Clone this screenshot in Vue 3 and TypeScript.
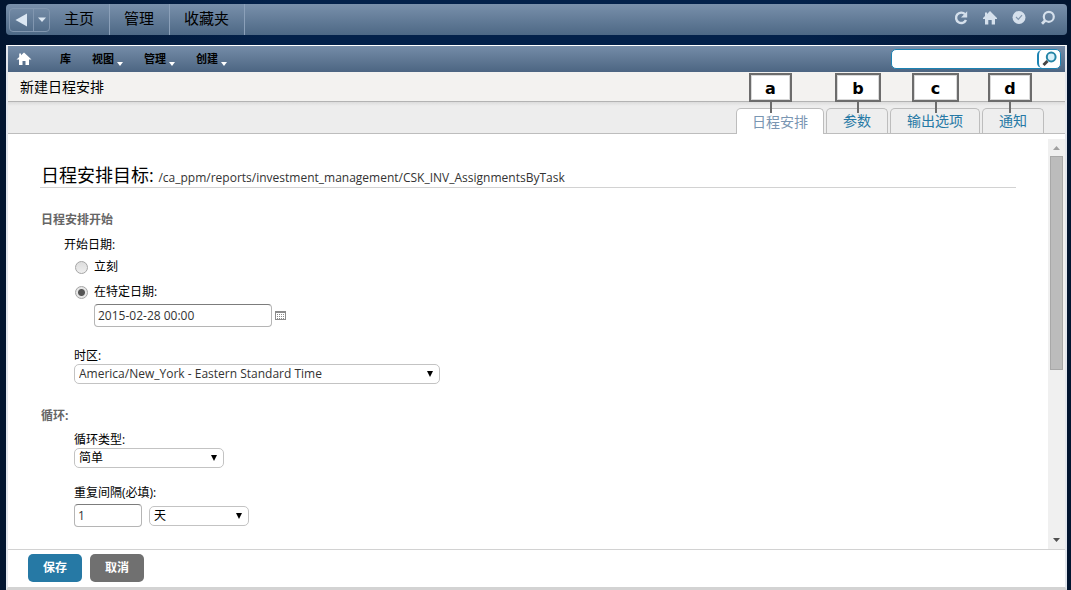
<script setup lang="ts">
import { ref } from 'vue'

interface Tab {
  label: string
  mark: string
  left: number
  width: number
}

const mainNav: string[] = ['主页', '管理', '收藏夹']
const menus = [
  { label: '库', drop: false },
  { label: '视图', drop: true },
  { label: '管理', drop: true },
  { label: '创建', drop: true },
]
const tabs: Tab[] = [
  { label: '日程安排', mark: 'a', left: 12, width: 43 },
  { label: '参数', mark: 'b', left: 8, width: 46 },
  { label: '输出选项', mark: 'c', left: 21, width: 47 },
  { label: '通知', mark: 'd', left: 5, width: 44 },
]
const active = ref(0)
const query = ref('')
const start = ref('date')
const startDate = ref('2015-02-28 00:00')
const interval = ref('1')
</script>

<template>
  <div class="app">
    <header class="topbar">
      <div class="history">
        <button type="button" class="back" aria-label="后退">
          <svg width="13" height="14" viewBox="0 0 13 14"><path d="M12 0.5V13.5L0.5 7Z" fill="#dbe7f3" /></svg>
        </button>
        <button type="button" class="recent" aria-label="历史记录">
          <svg width="8" height="5" viewBox="0 0 8 5"><path d="M0 0.5H8L4 5Z" fill="#dbe7f3" /></svg>
        </button>
      </div>
      <nav class="main-nav">
        <a v-for="item in mainNav" :key="item" href="#">{{ item }}</a>
      </nav>
      <div class="tools">
        <button type="button" aria-label="刷新">
          <svg width="16" height="16" viewBox="0 0 16 16"><path d="M12 4.2A5.2 5.2 0 1 0 13 10" fill="none" stroke="#d5e0ec" stroke-width="2.4" /><path d="M14.2 1.2V7.4H8Z" fill="#d5e0ec" /></svg>
        </button>
        <button type="button" aria-label="主页">
          <svg width="16" height="16" viewBox="0 0 16 16"><path d="M8 1L15 8V9H13V14.5H9.7V10H6.3V14.5H3V9H1V8L3 6V2.5H5V4Z" fill="#d5e0ec" /></svg>
        </button>
        <button type="button" aria-label="任务">
          <svg width="16" height="16" viewBox="0 0 16 16"><circle cx="8" cy="7.5" r="6.5" fill="#d5e0ec" /><path d="M5 7L7.3 9.3L11 5.2" fill="none" stroke="#8095ad" stroke-width="1.2" /></svg>
        </button>
        <button type="button" aria-label="搜索">
          <svg width="16" height="16" viewBox="0 0 16 16"><circle cx="8.8" cy="6.8" r="5" fill="none" stroke="#d5e0ec" stroke-width="2.2" /><path d="M5.5 10.2L2 13.7" stroke="#d5e0ec" stroke-width="2.8" /></svg>
        </button>
      </div>
    </header>

    <main class="frame">
      <div class="menubar">
        <a href="#" class="home" aria-label="主页">
          <svg width="16" height="14" viewBox="0 0 16 14"><path d="M8 0.5L15.5 7.5H13V13H9.5V9H6.5V13H3V7.5H0.5L3.2 5V1.5H5V3.3Z" fill="#fff" /></svg>
        </a>
        <nav class="menus">
          <button v-for="m in menus" :key="m.label" type="button">
            {{ m.label }}<svg v-if="m.drop" width="6" height="4" viewBox="0 0 6 4"><path d="M0 0H6L3 4Z" fill="#fff" /></svg>
          </button>
        </nav>
        <form class="search" @submit.prevent>
          <input v-model="query" type="text" aria-label="搜索" />
          <button type="submit" aria-label="执行搜索">
            <svg width="16" height="16" viewBox="0 0 16 16"><path d="M5.5 10L1.5 14" stroke="#444" stroke-width="3" /><circle cx="9.2" cy="6" r="4.4" fill="#d9f1fa" stroke="#2585a6" stroke-width="2" /></svg>
          </button>
        </form>
      </div>

      <h1 class="title">新建日程安排</h1>

      <div class="tabs" role="tablist">
        <button
          v-for="(tab, i) in tabs"
          :key="tab.label"
          type="button"
          role="tab"
          class="tab"
          :class="{ active: active === i }"
          :aria-selected="active === i"
          @click="active = i"
        >
          {{ tab.label }}
          <span class="callout" :style="{ left: tab.left + 'px', width: tab.width + 'px' }">{{ tab.mark }}</span>
        </button>
      </div>

      <div class="pane">
        <form class="form" @submit.prevent>
          <h2 class="target">日程安排目标: <span>/ca_ppm/reports/investment_management/CSK_INV_AssignmentsByTask</span></h2>

          <h3>日程安排开始</h3>
          <div class="start">
            <div class="label">开始日期:</div>
            <div class="radios">
              <label class="radio"><input v-model="start" type="radio" name="start" value="now" />立刻</label>
              <label class="radio"><input v-model="start" type="radio" name="start" value="date" />在特定日期:</label>
              <div class="date">
                <input v-model="startDate" type="text" class="text" aria-label="开始日期" />
                <button type="button" aria-label="日历">
                  <svg width="11" height="9" viewBox="0 0 11 9" shape-rendering="crispEdges">
                    <rect width="11" height="9" fill="#8c8c8c" />
                    <rect x="1" y="2" width="9" height="6" fill="#fff" />
                    <path d="M2 3.5H9M2 5.5H9M2 7.5H9" stroke="#8c8c8c" stroke-dasharray="1 1" />
                  </svg>
                </button>
              </div>
            </div>
          </div>
          <div class="field zone">
            <label for="zone">时区:</label>
            <div class="select wide">
              <select id="zone"><option>America/New_York - Eastern Standard Time</option></select>
              <svg width="6" height="6" viewBox="0 0 6 6"><path d="M0 0H6L3 6Z" /></svg>
            </div>
          </div>

          <h3>循环:</h3>
          <div class="field">
            <label for="kind">循环类型:</label>
            <div class="select medium">
              <select id="kind"><option>简单</option></select>
              <svg width="6" height="6" viewBox="0 0 6 6"><path d="M0 0H6L3 6Z" /></svg>
            </div>
          </div>
          <div class="field repeat">
            <label for="every">重复间隔(必填):</label>
            <div class="row">
              <input id="every" v-model="interval" type="text" class="text short" />
              <div class="select small">
                <select aria-label="间隔单位"><option>天</option></select>
                <svg width="6" height="6" viewBox="0 0 6 6"><path d="M0 0H6L3 6Z" /></svg>
              </div>
            </div>
          </div>
        </form>
        <div class="scrollbar" aria-hidden="true">
          <svg width="7" height="4" viewBox="0 0 7 4"><path d="M0 4H7L3.5 0Z" fill="#a0a0a0" /></svg>
          <div class="thumb"></div>
          <svg width="7" height="4" viewBox="0 0 7 4"><path d="M0 0H7L3.5 4Z" fill="#505050" /></svg>
        </div>
      </div>

      <footer class="actions">
        <button type="button" class="save">保存</button>
        <button type="button" class="cancel">取消</button>
      </footer>
    </main>
  </div>
</template>

<style>
body {
  margin: 0;
  background: #021530;
}
</style>

<style scoped>
.app,
.app * {
  box-sizing: border-box;
}
.app {
  min-height: 100vh;
  padding: 4px 4px 0 6px;
  display: flex;
  flex-direction: column;
  background: linear-gradient(90deg, #021530 0, #03214a 25%, #03214a 75%, #021530 100%);
  font-family: "Open Sans", "Noto Sans CJK SC", sans-serif;
  font-size: 12px;
  line-height: 16px;
  color: #000;
}
button,
input,
select {
  font: inherit;
  color: inherit;
  margin: 0;
  padding: 0;
  border: 0;
  background: none;
}
svg {
  display: block;
  flex: none;
}
h1,
h2,
h3 {
  margin: 0;
}

.topbar {
  height: 31px;
  display: flex;
  align-items: center;
  padding-left: 3px;
  border-radius: 4px;
  background: linear-gradient(#7990ab, #4d6885);
}
.history {
  display: flex;
  width: 41px;
  height: 24px;
  border: 1px solid #8196af;
  border-radius: 4px;
}
.history button {
  display: flex;
  align-items: center;
  justify-content: center;
}
.back {
  flex: 1;
}
.history .recent {
  width: 16px;
  border-left: 1px solid #8196af;
}
.main-nav {
  display: flex;
  align-self: stretch;
}
.main-nav a {
  display: flex;
  align-items: center;
  padding: 0 15px 3px 14px;
  border-right: 1px solid #8ba0b9;
  color: #000;
  font-size: 15px;
  text-decoration: none;
}
.tools {
  display: flex;
  gap: 13px;
  margin-left: auto;
  padding: 0 11px 4px 0;
}

.frame {
  flex: 1;
  display: flex;
  flex-direction: column;
  margin-top: 10px;
  border: 2px solid #e3e7ee;
  border-top: 1px solid #fff;
  border-bottom: 3px solid #d3d3d3;
  background: #fff;
}
.menubar {
  height: 26px;
  display: flex;
  align-items: center;
  padding: 0 4px 0 8px;
  background: linear-gradient(#758ca8, #4c6582);
}
.menus {
  display: flex;
  gap: 21px;
  margin-left: 28px;
}
.menus button {
  display: flex;
  gap: 3px;
  align-items: center;
  font-size: 11px;
  font-weight: 700;
}
.menus svg {
  align-self: flex-end;
  margin-bottom: 1px;
}
.search {
  display: flex;
  width: 170px;
  height: 20px;
  margin-left: auto;
  border: 1px solid #1b83b3;
  border-radius: 5px;
  background: #fff;
}
.search input {
  flex: 1;
  min-width: 0;
  padding: 0 6px;
}
.search button {
  width: 23px;
  display: flex;
  align-items: center;
  justify-content: center;
  border-left: 2px solid #1b83b3;
  border-radius: 5px;
}
.title {
  height: 30px;
  padding: 0 12px;
  border-bottom: 1px solid #b3b3b3;
  background: #f3f2f0;
  font-size: 14px;
  font-weight: 400;
  line-height: 30px;
}
.tabs {
  height: 32px;
  display: flex;
  justify-content: flex-end;
  align-items: flex-end;
  gap: 2px;
  padding-right: 21px;
  border-bottom: 1px solid #bdbdbd;
  background: linear-gradient(#dcdcdc, #ededed 4px);
}
.tab {
  position: relative;
  height: 25px;
  padding: 0 16px;
  border: 1px solid #bdbdbd;
  border-bottom: 0;
  border-radius: 5px 5px 0 0;
  background: #eee;
  color: #2679a5;
  font-size: 14px;
  line-height: 24px;
}
.tab.active {
  height: 26px;
  margin-bottom: -1px;
  padding: 0 15px;
  background: #fff;
  color: #7a96b2;
}
.callout {
  position: absolute;
  top: -36px;
  height: 29px;
  border: 2px solid #6c6c6c;
  background: #fff;
  box-shadow: inset 0 0 0 1px #d9d9d9;
  color: #000;
  font-family: "DejaVu Sans", sans-serif;
  font-size: 16px;
  font-weight: 700;
  line-height: 28px;
  text-align: center;
}
.callout::after {
  content: "";
  position: absolute;
  top: 27px;
  left: 50%;
  width: 2px;
  height: 11px;
  margin-left: -1px;
  background: #6c6c6c;
}

.pane {
  flex: 1;
  display: flex;
  justify-content: space-between;
}
.form {
  flex: 1;
  padding: 30px 32px 20px;
}
.target {
  height: 24px;
  padding-left: 1px;
  border-bottom: 1px solid #d2d2d2;
  font-size: 18px;
  font-weight: 400;
  line-height: 22px;
  white-space: nowrap;
}
.target span {
  color: #333;
  font-size: 12px;
}
h3 {
  margin-top: 24px;
  padding-left: 1px;
  color: #666;
  font-size: 12px;
  font-weight: 700;
  line-height: 16px;
}
.start {
  padding: 9px 0 0 24px;
}
.radios {
  padding: 1px 0 0 11px;
}
.radio {
  display: flex;
  align-items: center;
  gap: 6px;
  height: 26px;
}
.radio input {
  appearance: none;
  width: 13px;
  height: 13px;
  border: 1px solid #a5a5a5;
  border-radius: 50%;
  background: linear-gradient(#ddd, #eee);
}
.radio input:checked {
  background: radial-gradient(circle, #555 0 3px, #e6e6e6 4px);
}
.radio + .radio {
  height: 24px;
}
.date {
  display: flex;
  align-items: center;
  gap: 3px;
  padding-left: 19px;
}
.text {
  width: 178px;
  height: 23px;
  padding: 0 3px;
  border: 1px solid #b5b5b5;
  border-top-color: #7c7c7c;
  border-radius: 4px;
  background: #fff;
  color: #333;
}
.text.short {
  width: 68px;
}
.field {
  padding: 8px 0 0 34px;
}
.field label {
  display: block;
}
.field.zone {
  padding-top: 21px;
}
.field.repeat {
  padding-top: 17px;
}
.row {
  display: flex;
  align-items: center;
  gap: 7px;
  padding-top: 3px;
}
.select {
  position: relative;
  height: 20px;
}
.select select {
  appearance: none;
  width: 100%;
  height: 20px;
  padding: 0 4px;
  border: 1px solid #c3c3c3;
  border-radius: 5px;
  background: #fff;
}
.select svg {
  position: absolute;
  top: 7px;
  right: 7px;
  pointer-events: none;
}
.wide {
  width: 366px;
}
.wide select {
  color: #333;
}
.medium {
  width: 150px;
}
.small {
  width: 100px;
}
.scrollbar {
  width: 17px;
  margin-top: 5px;
  padding: 7px 0;
  display: flex;
  flex-direction: column;
  align-items: center;
  justify-content: space-between;
  background: #f0f0f0;
}
.thumb {
  width: 13px;
  height: 214px;
  margin: 6px 0 auto;
  border: 1px solid #a8a8a8;
  background: #bcbcbc;
}
.actions {
  height: 38px;
  display: flex;
  gap: 8px;
  padding: 4px 20px;
  border-top: 1px solid #d2d2d2;
}
.actions button {
  width: 54px;
  height: 28px;
  border-radius: 5px;
  color: #fff;
  font-weight: 700;
}
.save {
  background: #2679a5;
}
.cancel {
  background: #707070;
}
</style>
